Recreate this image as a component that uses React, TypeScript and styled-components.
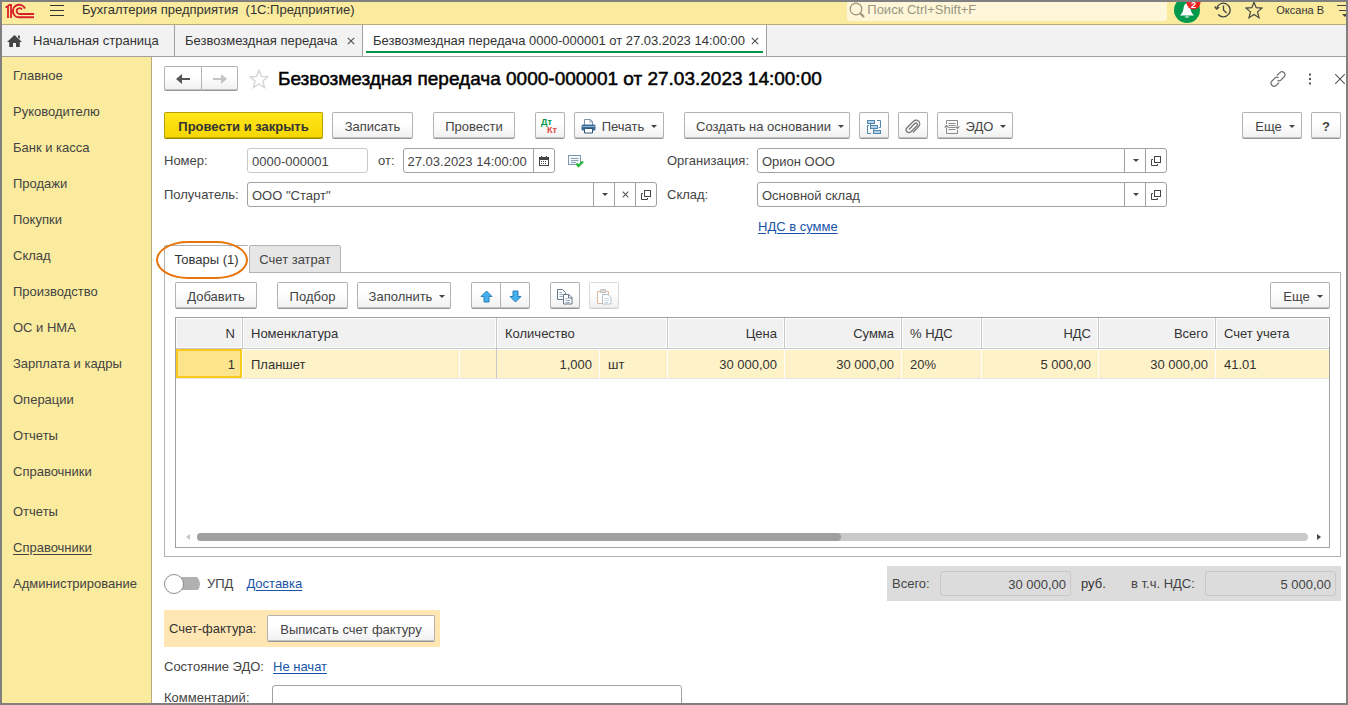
import React from "react";
import styled, { createGlobalStyle, css } from "styled-components";

const GlobalStyle = createGlobalStyle`
  *, *::before, *::after { box-sizing: border-box; }
  body { margin: 0; background: #fff; }
  body, button, input, table {
    font-family: "Liberation Sans", Arial, sans-serif;
    font-size: 13px;
    line-height: 16px;
    color: #444;
  }
  button { cursor: pointer; }
  svg { display: block; flex: none; }
`;

const Frame = styled.div`
  display: flex;
  flex-direction: column;
  height: 100vh;
  border: 2px solid #808080;
  overflow: hidden;
  background: #fff;
`;

/* ---------- top bar ---------- */

const TopBar = styled.header`
  display: flex;
  align-items: center;
  flex: none;
  height: 23px;
  padding: 0 0 6px 3px;
  background: #faeb9e;
  border-bottom: 1px solid #b5ab7c;
  overflow: hidden;
`;

const IconButton = styled.button`
  display: flex;
  align-items: center;
  justify-content: center;
  flex: none;
  padding: 0;
  border: 0;
  background: none;
  color: #4a4a4a;
`;

const MenuButton = styled(IconButton)`
  margin: 0 17px 0 15px;
`;

const AppName = styled.div`
  flex: 1;
  white-space: pre;
  color: #333;
`;

const Search = styled.label`
  display: flex;
  align-items: center;
  gap: 2px;
  width: 320px;
  height: 22px;
  padding-left: 2px;
  background: #fdf6d8;
  border-radius: 2px;
`;

const SearchInput = styled.input`
  flex: 1;
  min-width: 0;
  padding: 0;
  border: 0;
  outline: 0;
  background: none;
  &::placeholder { color: #9a957f; opacity: 1; }
`;

const TopActions = styled.div`
  display: flex;
  align-items: center;
  gap: 13px;
  margin: 0 -7px 0 6px;
`;

const UserName = styled.span`
  font-size: 11px;
  color: #333;
`;

/* ---------- window tabs ---------- */

const WindowTabs = styled.nav`
  display: flex;
  flex: none;
  height: 32px;
  background: #f2f2f2;
  border-bottom: 1px solid #a0a0a0;
`;

const WindowTab = styled.div<{ $w: number; $active?: boolean }>`
  display: flex;
  align-items: center;
  justify-content: space-between;
  width: ${(p) => p.$w}px;
  padding: 0 7px 0 10px;
  border-right: 1px solid #a0a0a0;
  white-space: nowrap;
  ${(p) =>
    p.$active &&
    css`
      background: linear-gradient(#009646, #009646) no-repeat center 26px / calc(100% - 6px) 2px #fff;
    `}
`;

const HomeTab = styled(WindowTab)`
  justify-content: flex-start;
  gap: 11px;
  padding: 0 0 0 5px;
`;

const TabLink = styled.a`
  color: #333;
  text-decoration: none;
`;

/* ---------- body ---------- */

const Body = styled.div`
  display: flex;
  flex: 1;
  min-height: 0;
`;

const Sidebar = styled.nav`
  flex: none;
  width: 150px;
  padding-top: 1px;
  background: #faeb9e;
  border-right: 1px solid #b5ab7c;
`;

const SideLink = styled.a<{ $underlined?: boolean; $spaced?: boolean }>`
  display: flex;
  align-items: center;
  height: 36px;
  margin-top: ${(p) => (p.$spaced ? "4px" : "0")};
  padding-left: 11px;
  color: #444;
  text-decoration: ${(p) => (p.$underlined ? "underline" : "none")};
  text-underline-offset: 2px;
`;

const Main = styled.main`
  flex: 1;
  min-width: 0;
  padding: 9px 5px 0 12px;
  overflow: hidden;
`;

const TitleRow = styled.div`
  display: flex;
  align-items: center;
  height: 25px;
`;

const Title = styled.h1`
  flex: 1;
  margin: 0 0 0 9px;
  font-size: 19px;
  line-height: 24px;
  font-weight: 400;
  color: #000;
  -webkit-text-stroke: 0.5px #000;
  white-space: nowrap;
`;

const TitleActions = styled.div`
  display: flex;
  align-items: center;
  gap: 16px;
  margin-right: -5px;
`;

const Button = styled.button<{ $w?: number; $primary?: boolean; $faded?: boolean; $menu?: boolean }>`
  display: flex;
  align-items: center;
  justify-content: center;
  gap: 6px;
  flex: none;
  width: ${(p) => p.$w ?? 30}px;
  height: 27px;
  padding: 2px 0 0 ${(p) => (p.$menu ? "6px" : "0")};
  border: 1px solid ${(p) => (p.$faded ? "#d9d9d9" : "#b3b3b3")};
  border-bottom-color: ${(p) => (p.$faded ? "#cfcfcf" : "#979797")};
  border-radius: 2px;
  background: linear-gradient(#fff 40%, #f0f0f0);
  box-shadow: inset 0 -1px 0 ${(p) => (p.$faded ? "#e6e6e6" : "#c4c4c4")};
  white-space: nowrap;
  ${(p) =>
    p.$primary &&
    css`
      border-color: #b8a000;
      border-bottom-color: #9c8800;
      background: linear-gradient(#ffe51c, #f5d600);
      box-shadow: inset 0 -1px 0 #c9b000;
      font-weight: 700;
      color: #333;
    `}
`;

const Joined = styled.div`
  display: flex;
  & > button:first-child { border-radius: 2px 0 0 2px; }
  & > button:last-child { margin-left: -1px; border-radius: 0 2px 2px 0; }
`;

const NavPair = styled(Joined)`
  margin-right: 11px;
  & > button { height: 25px; padding: 0; }
`;

const Toolbar = styled.div`
  display: flex;
  margin-top: 21px;
`;

const ToolGroup = styled.div`
  display: flex;
  gap: 9px;
  margin-right: 20px;
`;

const ToolEnd = styled.div`
  display: flex;
  gap: 9px;
  margin-left: auto;
`;

const Caret = styled.span`
  margin-left: 1px;
  border: 3px solid transparent;
  border-top-color: #444;
  border-bottom: 0;
`;

/* ---------- header fields ---------- */

const Form = styled.div`
  display: grid;
  grid-template-columns: 493fr 500fr 164fr;
  gap: 9px 10px;
  margin-top: 9px;
`;

const FieldRow = styled.div<{ $label: number }>`
  display: grid;
  grid-template-columns: ${(p) => p.$label}px minmax(0, 1fr);
  align-items: center;
  height: 25px;
`;

const Inline = styled.div`
  display: flex;
  align-items: center;
`;

const DateLabel = styled.label`
  margin: 0 8px 0 10px;
`;

const Posted = styled.span`
  margin-left: 13px;
`;

const InputBox = styled.div<{ $w?: number; $soft?: boolean }>`
  display: flex;
  flex: none;
  width: ${(p) => (p.$w ? p.$w + "px" : "100%")};
  height: 25px;
  border: 1px solid ${(p) => (p.$soft ? "#c8c8c8" : "#a0a0a0")};
  border-radius: 3px;
  overflow: hidden;
`;

const TextInput = styled.input<{ $right?: boolean }>`
  flex: 1;
  min-width: 0;
  padding: 2px 4px 0;
  border: 0;
  outline: 0;
  background: none;
  text-align: ${(p) => (p.$right ? "right" : "left")};
`;

const InputButton = styled(IconButton)`
  width: 21px;
  border-left: 1px solid #a0a0a0;
`;

const Link = styled.a`
  color: #1a54a8;
  text-underline-offset: 2px;
`;

const VatLine = styled.div`
  grid-column: 2;
  height: 20px;
  padding: 3px 0 0 91px;
`;

/* ---------- tab panel ---------- */

const PageTabs = styled.div`
  display: flex;
  margin: 9px 0 -1px;
`;

const PageTab = styled.button<{ $w: number; $active?: boolean }>`
  position: relative;
  width: ${(p) => p.$w}px;
  height: 28px;
  padding: 1px 0 0;
  border: 1px solid #b3b3b3;
  border-radius: 2px 2px 0 0;
  background: ${(p) => (p.$active ? "#fff" : "#e6e6e6")};
  ${(p) => p.$active && "border-bottom-color: #fff; border-right-color: #fff; color: #333;"}
`;

const Callout = styled.span`
  position: absolute;
  inset: -5px 0 -7px -9px;
  border: 2px solid #e8740c;
  border-radius: 32px / 19px;
`;

const Panel = styled.section`
  padding: 9px 10px 8px;
  border: 1px solid #b3b3b3;
`;

const PanelTools = styled.div`
  display: flex;
`;

const GridBox = styled.div`
  display: flex;
  flex-direction: column;
  justify-content: space-between;
  height: 231px;
  margin-top: 8px;
  border: 1px solid #a0a0a0;
`;

const Grid = styled.table`
  width: 100%;
  table-layout: fixed;
  border-collapse: separate;
  border-spacing: 0;
  color: #333;
`;

const cell = css<{ $right?: boolean }>`
  padding: 2px 7px 0 8px;
  text-align: ${(p) => (p.$right ? "right" : "left")};
  white-space: nowrap;
`;

const Th = styled.th<{ $right?: boolean }>`
  ${cell}
  height: 31px;
  font-weight: 400;
  background: #f1f1f1;
  border-right: 1px solid #c8c8c8;
  border-bottom: 1px solid #c8c8c8;
  box-shadow: inset 0 0 0 1px #fff;
  &:last-child { border-right: 0; }
`;

const Td = styled.td<{ $right?: boolean; $current?: boolean; $ruled?: boolean }>`
  ${cell}
  height: 30px;
  background: #fef2c8;
  border-right: 1px solid ${(p) => (p.$ruled ? "#c8c8c8" : "#fff")};
  border-bottom: 1px solid #e4e4e4;
  box-shadow: inset 0 1px 0 #fff;
  &:last-child { border-right: 0; }
  ${(p) =>
    p.$current &&
    css`
      background: #fbe48c;
      box-shadow: inset 0 0 0 2px #fbc81e;
    `}
`;

const ScrollRow = styled.div`
  display: flex;
  align-items: center;
  gap: 7px;
  height: 20px;
  padding: 0 8px 0 10px;
`;

const ScrollTrack = styled.div`
  flex: 1;
  height: 8px;
  border-radius: 4px;
  background: #cacaca;
`;

const ScrollThumb = styled.div`
  width: 58%;
  height: 8px;
  border-radius: 4px;
  background: #a0a0a0;
`;

const ScrollArrow = styled.span<{ $dir: "left" | "right" }>`
  border: 3px solid transparent;
  ${(p) =>
    p.$dir === "left"
      ? "border-right: 4px solid #c4c4c4; border-left: 0;"
      : "border-left: 4px solid #444; border-right: 0; margin-left: 2px;"}
`;

/* ---------- footer ---------- */

const FooterRow = styled.div`
  display: flex;
  align-items: center;
  justify-content: space-between;
  margin-top: 9px;
`;

const SwitchLabel = styled.label`
  display: flex;
  align-items: center;
  gap: 7px;
  margin-right: 13px;
`;

const Switch = styled.input`
  appearance: none;
  display: flex;
  align-items: center;
  width: 36px;
  height: 20px;
  margin: 0;
  background: linear-gradient(#b0b0b0, #b0b0b0) no-repeat right center / 26px 13px;
  border-radius: 10px;
  &::before {
    content: "";
    width: 20px;
    height: 20px;
    border: 1px solid #8c8c8c;
    border-radius: 50%;
    background: #fff;
  }
`;

const Totals = styled.div`
  display: flex;
  align-items: center;
  height: 35px;
  padding: 0 5px;
  background: #dcdcdc;
`;

const TotalLabel = styled.label<{ $w: number }>`
  width: ${(p) => p.$w}px;
`;

const Currency = styled.span`
  width: 60px;
  padding-left: 10px;
  color: #333;
`;

const InvoiceBlock = styled.div`
  display: flex;
  align-items: center;
  width: fit-content;
  height: 37px;
  margin-top: 9px;
  padding: 0 5px;
  background: #ffe6b3;
`;

const InvoiceLabel = styled.span`
  width: 98px;
  color: #333;
`;

const StatusRow = styled.div`
  display: grid;
  grid-template-columns: 109px 1fr;
  align-items: center;
  height: 38px;
  padding-top: 2px;
`;

const CommentRow = styled.div`
  display: grid;
  grid-template-columns: 108px 410px;
  align-items: center;
`;

/* ---------- icons ---------- */

const Logo = () => (
  <svg width="30" height="19" viewBox="0 0 30 19" fill="none" stroke="#d8202a" strokeWidth="2">
    <path d="M0.500 6.500 L3 5 V17 M3.500 4 H6 V17" strokeWidth="1.800" />
    <path d="M20 7.500 A6.300 6.300 0 1 0 15 16.300 H29" />
    <path d="M17 8.500 A2.900 2.900 0 1 0 15 13 H29" strokeWidth="1.800" />
  </svg>
);

const Burger = () => (
  <svg width="15" height="13" viewBox="0 0 15 13" stroke="#333" strokeWidth="1">
    <path d="M0 1.500H14M0 6.500H14M0 11.500H14" />
  </svg>
);

const Lens = () => (
  <svg width="16" height="16" viewBox="0 0 16 16" fill="none" stroke="#99917a">
    <circle cx="7" cy="7" r="5.800" strokeWidth="1.200" />
    <path d="M11.200 11.200 L15 15" strokeWidth="2" />
  </svg>
);

const Bell = () => (
  <svg width="28" height="28" viewBox="0 0 28 28">
    <circle cx="14" cy="14" r="13" fill="#009a4c" />
    <path d="M7 19.500 C9 17.500 10 16 10.500 12.500 C10.800 9 12 7.500 14 7.500 C16 7.500 17.200 9 17.500 12.500 C18 16 19 17.500 21 19.500 Z" fill="#fff" />
    <path d="M11.500 20.500 H16.500 Q14 23 11.500 20.500Z" fill="#fff" />
    <circle cx="20.500" cy="6.500" r="7" fill="#ee2424" />
    <text x="20.500" y="12" textAnchor="middle" fontSize="9" fontWeight="700" fill="#fff">2</text>
  </svg>
);

const History = () => (
  <svg width="18" height="18" viewBox="0 0 18 18" fill="none" stroke="#444" strokeWidth="1.300">
    <path d="M2.800 7 A6.800 6.800 0 1 1 4.200 13.500" />
    <path d="M0.800 5.500 L2.600 8 L5.200 6.300" />
    <path d="M9.500 4.500 V9 L12.500 12" />
  </svg>
);

const Star = ({ size, color }: { size: number; color: string }) => (
  <svg width={size} height={size} viewBox="0 0 18 18" fill="none" stroke={color} strokeWidth="1.200">
    <path d="M9 1.200 L11.200 6.700 L17 7.100 L12.500 10.900 L14 16.700 L9 13.500 L4 16.700 L5.500 10.900 L1 7.100 L6.800 6.700 Z" />
  </svg>
);

const UserMenu = () => (
  <svg width="16" height="16" viewBox="0 0 16 16" stroke="#444" strokeWidth="1.200">
    <path d="M0 3.500H16M2 8.500H14" />
    <path d="M5 12 L11 12 L8 15Z" fill="#444" stroke="none" />
  </svg>
);

const Home = () => (
  <svg width="15" height="14" viewBox="0 0 15 14" fill="#444">
    <path d="M7.500 1 L15 8 H12.800 V13 H9 V9 H6 V13 H2.200 V8 H0 Z M11 1.500 H12.800 V5 L11 3.500Z" />
  </svg>
);

const Cross = ({ size = 8, color = "#555" }: { size?: number; color?: string }) => (
  <svg width={size} height={size} viewBox="0 0 8 8" stroke={color} strokeWidth={size > 8 ? 0.7 : 1.2}>
    <path d="M0.800 0.800 L7.200 7.200 M7.200 0.800 L0.800 7.200" />
  </svg>
);

const Arrow = ({ back }: { back?: boolean }) => (
  <svg width="16" height="12" viewBox="0 0 16 12" fill={back ? "#555" : "#c4c4c4"}>
    {back ? <path d="M1 6 L7 1 V5 H15 V7 H7 V11Z" /> : <path d="M15 6 L9 1 V5 H1 V7 H9 V11Z" />}
  </svg>
);

const Chain = () => (
  <svg width="16" height="16" viewBox="0 0 16 16" fill="none" stroke="#707070" strokeWidth="1.200">
    <path d="M7 4.500 L9.800 1.700 A2.800 2.800 0 0 1 14 6 L11 9 A2.800 2.800 0 0 1 7.500 9.200" />
    <path d="M9 11.500 L6.200 14.300 A2.800 2.800 0 0 1 2 10 L5 7 A2.800 2.800 0 0 1 8.500 6.800" />
  </svg>
);

const Dots = () => (
  <svg width="16" height="12" viewBox="0 0 16 12" fill="#555">
    <path d="M7 0.500h2v2h-2zM7 5h2v2h-2zM7 9.500h2v2h-2z" />
  </svg>
);

const DtKt = () => (
  <svg width="20" height="18" viewBox="0 0 20 18" fontSize="9" fontWeight="700">
    <text x="1" y="7" fill="#00964b">Дт</text>
    <text x="7" y="15" fill="#e04848">Кт</text>
  </svg>
);

const Printer = () => (
  <svg width="15" height="15" viewBox="0 0 15 15">
    <path d="M3.500 6 V0.500 H9.500 L11.500 2.500 V6" fill="#fff" stroke="#8294a6" />
    <path d="M9 0.500 V3 H11.500" fill="none" stroke="#8294a6" />
    <rect x="0.500" y="5.500" width="14" height="6" rx="1.500" fill="#3c6a96" />
    <path d="M1 7.500H14" stroke="#8bb0d4" />
    <path d="M3.500 9.500 H11.500 V14 H3.500Z" fill="#fff" stroke="#2f5478" />
  </svg>
);

const Structure = () => (
  <svg width="16" height="16" viewBox="0 0 16 16" fill="none" stroke="#4f88ae">
    <path d="M4.500 4 V7.500 H5 M8 9 V12.500 M11 1.500 H14.500 V8.500 H13 M5 14.500 H1.500 V6.500 H3" />
    <g fill="#b4d3ea">
      <rect x="1.500" y="1.500" width="7" height="3" />
      <rect x="4.500" y="6.500" width="7" height="3" />
      <rect x="7.500" y="11.500" width="7" height="3" />
    </g>
  </svg>
);

const Clip = () => (
  <svg width="16" height="16" viewBox="0 0 16 16" fill="none" stroke="#777" strokeWidth="1.300">
    <path d="M4 10.500 L9.800 4.500 A1.500 1.500 0 0 1 12 6.600 L6 12.800 A2.800 2.800 0 0 1 2 8.800 L8.500 2.300 A3.500 3.500 0 0 1 13.700 7.300 L8 13.500" />
  </svg>
);

const Exchange = () => (
  <svg width="16" height="16" viewBox="0 0 16 16" fill="none" stroke="#8a8a8a">
    <path d="M2.500 5 V1.500 H13.500 V7 M2.500 9 V14.500 H13.500 V11" />
    <path d="M4.500 4.500H11.500M4.500 6.500H11.500M4.500 8.500H11.500M4.500 10.500H11.500" />
    <path d="M0 8.500 L2.500 5.500 L5 8.500Z M11 7.500 L13.500 10.500 L16 7.500Z" fill="#8a8a8a" stroke="none" />
  </svg>
);

const Calendar = () => (
  <svg width="10" height="10" viewBox="0 0 10 10" fill="#444">
    <path d="M0 1 H10 V10 H0Z M1 4 V9 H9 V4Z" fillRule="evenodd" />
    <path d="M2 0h1v2h-1zM7 0h1v2h-1zM2 5h1v1h-1zM4 5h1v1h-1zM6 5h1v1h-1zM2 7h1v1h-1zM4 7h1v1h-1zM6 7h1v1h-1z" />
  </svg>
);

const OpenIcon = () => (
  <svg width="10" height="10" viewBox="0 0 10 10" fill="none" stroke="#444">
    <rect x="3.500" y="0.500" width="6" height="6" />
    <path d="M2 3.500 H0.500 V9.500 H6.500 V8" />
  </svg>
);

const PostedIcon = () => (
  <svg width="16" height="14" viewBox="0 0 16 14" fill="none">
    <rect x="0.500" y="1.500" width="12" height="9" fill="#f4f8fb" stroke="#7d97b0" />
    <path d="M3 4.500H10.500M3 6.500H10.500M3 8.500H8" stroke="#8aa0b5" />
    <path d="M8.500 9.500 L10.500 12 L15 7.500" stroke="#2db83d" strokeWidth="2.400" />
  </svg>
);

const BlueArrow = ({ down }: { down?: boolean }) => (
  <svg width="13" height="13" viewBox="0 0 13 13" fill="#45b0ee" stroke="#2b7fb8">
    <path
      d={
        down
          ? "M6.500 12 L12 6.500 H9 V1 H4 V6.500 H1 Z"
          : "M6.500 1 L12 6.500 H9 V12 H4 V6.500 H1 Z"
      }
    />
  </svg>
);

const CopyIcon = () => (
  <svg width="16" height="16" viewBox="0 0 16 16" fill="#fff" stroke="#66788c">
    <path d="M0.500 0.500 H5.500 L8.500 3.500 V10.500 H0.500Z" />
    <path d="M2.500 3.500H5M2.500 5.500H6M2.500 7.500H6" stroke="#9aabbd" />
    <path d="M6.500 5.500 H12 L15 8.500 V15 H6.500Z" />
    <path d="M11.500 5.500 V9 H15" fill="none" />
    <path d="M8.500 9.500H10.500M8.500 11.500H13M8.500 13.500H13" stroke="#9aabbd" />
  </svg>
);

const PasteIcon = () => (
  <svg width="16" height="16" viewBox="0 0 16 16" fill="#fff" stroke="#dfb79c">
    <path d="M1.500 2.500 H12.500 V14.500 H1.500Z" />
    <path d="M4.500 0.500 H9.500 V3.500 H4.500Z" fill="#d8d8d8" stroke="#c4c4c4" />
    <path d="M6.500 5.500 H12 L15 8.500 V15 H6.500Z" stroke="#b3c0cc" />
    <path d="M8.500 9.500H13M8.500 11.500H13M8.500 13.500H12" stroke="#ccd6df" />
  </svg>
);

/* ---------- data ---------- */

const sections = [
  "Главное",
  "Руководителю",
  "Банк и касса",
  "Продажи",
  "Покупки",
  "Склад",
  "Производство",
  "ОС и НМА",
  "Зарплата и кадры",
  "Операции",
  "Отчеты",
  "Справочники",
];

const columnWidths = [67, undefined, 37, 103, 68, 117, 117, 80, 117, 117, 113];

type LookupProps = { id: string; value: string; clearable?: boolean };

const Lookup = ({ id, value, clearable }: LookupProps) => (
  <InputBox>
    <TextInput id={id} defaultValue={value} />
    <InputButton aria-label="Выбрать"><Caret /></InputButton>
    {clearable && <InputButton aria-label="Очистить"><Cross size={7} /></InputButton>}
    <InputButton aria-label="Открыть"><OpenIcon /></InputButton>
  </InputBox>
);

export default function App() {
  return (
    <Frame>
      <GlobalStyle />
      <TopBar>
        <Logo />
        <MenuButton aria-label="Меню"><Burger /></MenuButton>
        <AppName>{"Бухгалтерия предприятия  (1С:Предприятие)"}</AppName>
        <Search>
          <Lens />
          <SearchInput placeholder="Поиск Ctrl+Shift+F" aria-label="Поиск" />
        </Search>
        <TopActions>
          <IconButton aria-label="Уведомления"><Bell /></IconButton>
          <IconButton aria-label="История"><History /></IconButton>
          <IconButton aria-label="Избранное"><Star size={18} color="#444" /></IconButton>
          <UserName>Оксана В</UserName>
          <IconButton aria-label="Настройки"><UserMenu /></IconButton>
        </TopActions>
      </TopBar>

      <WindowTabs>
        <HomeTab $w={173}>
          <Home />
          <TabLink href="#home">Начальная страница</TabLink>
        </HomeTab>
        <WindowTab $w={188}>
          <TabLink href="#list">Безвозмездная передача</TabLink>
          <IconButton aria-label="Закрыть вкладку"><Cross /></IconButton>
        </WindowTab>
        <WindowTab $w={404} $active>
          <TabLink href="#doc">Безвозмездная передача 0000-000001 от 27.03.2023 14:00:00</TabLink>
          <IconButton aria-label="Закрыть вкладку"><Cross /></IconButton>
        </WindowTab>
      </WindowTabs>

      <Body>
        <Sidebar>
          {sections.map((name) => (
            <SideLink key={name} href="#section">{name}</SideLink>
          ))}
          <SideLink href="#section" $spaced>Отчеты</SideLink>
          <SideLink href="#section" $underlined>Справочники</SideLink>
          <SideLink href="#section">Администрирование</SideLink>
        </Sidebar>

        <Main>
          <TitleRow>
            <NavPair>
              <Button $w={38} aria-label="Назад"><Arrow back /></Button>
              <Button $w={37} aria-label="Вперед"><Arrow /></Button>
            </NavPair>
            <IconButton aria-label="В избранное"><Star size={20} color="#d4d4d4" /></IconButton>
            <Title>Безвозмездная передача 0000-000001 от 27.03.2023 14:00:00</Title>
            <TitleActions>
              <IconButton aria-label="Ссылка"><Chain /></IconButton>
              <IconButton aria-label="Действия"><Dots /></IconButton>
              <IconButton aria-label="Закрыть"><Cross size={12} /></IconButton>
            </TitleActions>
          </TitleRow>

          <Toolbar>
            <ToolGroup>
              <Button $w={159} $primary>Провести и закрыть</Button>
              <Button $w={81}>Записать</Button>
            </ToolGroup>
            <ToolGroup>
              <Button $w={82}>Провести</Button>
            </ToolGroup>
            <ToolGroup>
              <Button aria-label="Дт Кт"><DtKt /></Button>
              <Button $w={90}><Printer />Печать<Caret /></Button>
            </ToolGroup>
            <ToolGroup>
              <Button $w={166} $menu>Создать на основании<Caret /></Button>
              <Button aria-label="Структура подчиненности"><Structure /></Button>
              <Button aria-label="Файлы"><Clip /></Button>
              <Button $w={76}><Exchange />ЭДО<Caret /></Button>
            </ToolGroup>
            <ToolEnd>
              <Button $w={60} $menu>Еще<Caret /></Button>
              <Button aria-label="Справка"><b>?</b></Button>
            </ToolEnd>
          </Toolbar>

          <Form>
            <FieldRow $label={83}>
              <label htmlFor="number">Номер:</label>
              <Inline>
                <InputBox $w={121} $soft><TextInput id="number" defaultValue="0000-000001" /></InputBox>
                <DateLabel htmlFor="date">от:</DateLabel>
                <InputBox $w={152}>
                  <TextInput id="date" defaultValue="27.03.2023 14:00:00" />
                  <InputButton aria-label="Календарь"><Calendar /></InputButton>
                </InputBox>
                <Posted><PostedIcon /></Posted>
              </Inline>
            </FieldRow>
            <FieldRow $label={90}>
              <label htmlFor="org">Организация:</label>
              <Lookup id="org" value="Орион ООО" />
            </FieldRow>
            <span />
            <FieldRow $label={83}>
              <label htmlFor="recipient">Получатель:</label>
              <Lookup id="recipient" value={'ООО "Старт"'} clearable />
            </FieldRow>
            <FieldRow $label={90}>
              <label htmlFor="store">Склад:</label>
              <Lookup id="store" value="Основной склад" />
            </FieldRow>
            <span />
            <VatLine><Link href="#vat">НДС в сумме</Link></VatLine>
          </Form>

          <PageTabs>
            <PageTab $w={85} $active>Товары (1)<Callout /></PageTab>
            <PageTab $w={92}>Счет затрат</PageTab>
          </PageTabs>
          <Panel>
            <PanelTools>
              <ToolGroup><Button $w={82}>Добавить</Button></ToolGroup>
              <ToolGroup>
                <Button $w={71}>Подбор</Button>
                <Button $w={94} $menu>Заполнить<Caret /></Button>
              </ToolGroup>
              <ToolGroup>
                <Joined>
                  <Button aria-label="Вверх"><BlueArrow /></Button>
                  <Button aria-label="Вниз"><BlueArrow down /></Button>
                </Joined>
              </ToolGroup>
              <ToolGroup>
                <Button aria-label="Копировать"><CopyIcon /></Button>
                <Button $faded aria-label="Вставить"><PasteIcon /></Button>
              </ToolGroup>
              <ToolEnd><Button $w={60} $menu>Еще<Caret /></Button></ToolEnd>
            </PanelTools>

            <GridBox>
              <Grid>
                <colgroup>
                  {columnWidths.map((width, i) => <col key={i} width={width} />)}
                </colgroup>
                <thead>
                  <tr>
                    <Th $right>N</Th>
                    <Th colSpan={2}>Номенклатура</Th>
                    <Th colSpan={2}>Количество</Th>
                    <Th $right>Цена</Th>
                    <Th $right>Сумма</Th>
                    <Th>% НДС</Th>
                    <Th $right>НДС</Th>
                    <Th $right>Всего</Th>
                    <Th>Счет учета</Th>
                  </tr>
                </thead>
                <tbody>
                  <tr>
                    <Td $right $current>1</Td>
                    <Td>Планшет</Td>
                    <Td $ruled />
                    <Td $right>1,000</Td>
                    <Td>шт</Td>
                    <Td $right>30 000,00</Td>
                    <Td $right>30 000,00</Td>
                    <Td>20%</Td>
                    <Td $right>5 000,00</Td>
                    <Td $right>30 000,00</Td>
                    <Td>41.01</Td>
                  </tr>
                </tbody>
              </Grid>
              <ScrollRow>
                <ScrollArrow $dir="left" />
                <ScrollTrack><ScrollThumb /></ScrollTrack>
                <ScrollArrow $dir="right" />
              </ScrollRow>
            </GridBox>
          </Panel>

          <FooterRow>
            <Inline>
              <SwitchLabel><Switch type="checkbox" />УПД</SwitchLabel>
              <Link href="#delivery">Доставка</Link>
            </Inline>
            <Totals>
              <TotalLabel $w={48} htmlFor="total">Всего:</TotalLabel>
              <InputBox $w={131} $soft><TextInput id="total" $right readOnly value="30 000,00" /></InputBox>
              <Currency>руб.</Currency>
              <TotalLabel $w={74} htmlFor="vat">в т.ч. НДС:</TotalLabel>
              <InputBox $w={131} $soft><TextInput id="vat" $right readOnly value="5 000,00" /></InputBox>
            </Totals>
          </FooterRow>

          <InvoiceBlock>
            <InvoiceLabel>Счет-фактура:</InvoiceLabel>
            <Button $w={168}>Выписать счет фактуру</Button>
          </InvoiceBlock>
          <StatusRow>
            <span>Состояние ЭДО:</span>
            <span><Link href="#edo">Не начат</Link></span>
          </StatusRow>
          <CommentRow>
            <label htmlFor="comment">Комментарий:</label>
            <InputBox><TextInput id="comment" /></InputBox>
          </CommentRow>
        </Main>
      </Body>
    </Frame>
  );
}
